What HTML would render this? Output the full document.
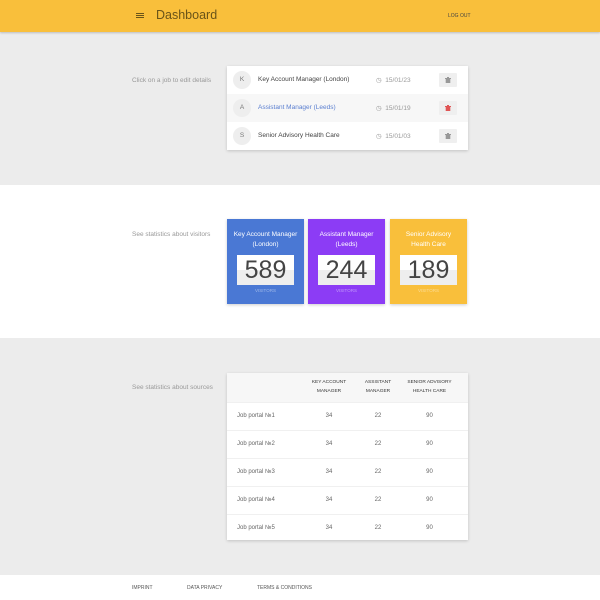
<!DOCTYPE html>
<html><head><meta charset="utf-8"><style>
*{margin:0;padding:0;box-sizing:border-box}
body{width:600px;height:600px;position:relative;font-family:"Liberation Sans",sans-serif;background:#fff;overflow:hidden;color:#333}
.a{position:absolute}
.hdr{left:0;top:0;width:600px;height:32px;background:#f9bf3b;box-shadow:0 1px 2px rgba(0,0,0,.2);z-index:2}
.g{background:#ececec;left:0;width:600px}
.lbl{font-size:6.5px;color:#999}
.card{background:#fff;box-shadow:0 1px 3px rgba(0,0,0,.18)}
.row{position:absolute;left:0;width:241px;height:28px;font-size:6.5px;color:#444}
.av{position:absolute;left:6px;top:5px;width:18px;height:18px;border-radius:50%;background:#eee;color:#777;font-size:6.5px;text-align:center;line-height:18px}
.st{top:219px;height:85px;width:77px;color:#fff;text-align:center;font-size:6.5px;box-shadow:0 1px 3px rgba(0,0,0,.2)}
.num{position:absolute;left:10px;top:36px;width:57px;height:30px;background:linear-gradient(#fff 50%,#eee 50%);color:#444;font-size:25px;line-height:30px}
.vis{position:absolute;left:0;width:100%;top:69px;font-size:4.5px;opacity:.45}
.btn{position:absolute;left:212px;top:7px;width:18px;height:14px;background:#efefef;border-radius:1px}
.btn svg{position:absolute;left:6px;top:4px}
td{font-size:6px;color:#666;height:28px;border-top:1px solid #f0f0f0}
th{font-size:4.8px;font-weight:normal;color:#333;height:29px;background:#f7f7f7;line-height:9px}
.hl{position:absolute;left:136px;width:8px;height:1.3px;background:#6a5419}
</style></head><body>
<div class="a hdr">
 <div class="hl" style="top:13px"></div><div class="hl" style="top:15px"></div><div class="hl" style="top:17px"></div>
 <div class="a" style="left:156px;top:8px;font-size:12.5px;color:#6a5419">Dashboard</div>
 <div class="a" style="left:448px;top:13px;font-size:5px;color:#444">LOG OUT</div>
</div>
<div class="a g" style="top:32px;height:153px"></div>
<div class="a g" style="top:338px;height:237px"></div>

<div class="a lbl" style="left:132px;top:77px">Click on a job to edit details</div>
<div class="a card" style="left:227px;top:66px;width:241px;height:84px">
 <div class="row" style="top:0"><div class="av">K</div><span class="a" style="left:31px;top:10px">Key Account Manager (London)</span><span class="a" style="left:149px;top:10px;color:#999">◷&nbsp; 15/01/23</span><div class="btn"><svg width="6" height="6" viewBox="0 0 6 6"><rect x="0" y="1" width="6" height="1" fill="#999"/><rect x="2" y="0" width="2" height="1" fill="#999"/><rect x="0.7" y="2" width="4.6" height="4" fill="#999"/></svg></div></div>
 <div class="row" style="top:28px;background:#f7f7f7"><div class="av">A</div><span class="a" style="left:31px;top:10px;color:#5b7fd0">Assistant Manager (Leeds)</span><span class="a" style="left:149px;top:10px;color:#999">◷&nbsp; 15/01/19</span><div class="btn"><svg width="6" height="6" viewBox="0 0 6 6"><rect x="0" y="1" width="6" height="1" fill="#e05555"/><rect x="2" y="0" width="2" height="1" fill="#e05555"/><rect x="0.7" y="2" width="4.6" height="4" fill="#e05555"/></svg></div></div>
 <div class="row" style="top:56px"><div class="av">S</div><span class="a" style="left:31px;top:10px">Senior Advisory Health Care</span><span class="a" style="left:149px;top:10px;color:#999">◷&nbsp; 15/01/03</span><div class="btn"><svg width="6" height="6" viewBox="0 0 6 6"><rect x="0" y="1" width="6" height="1" fill="#999"/><rect x="2" y="0" width="2" height="1" fill="#999"/><rect x="0.7" y="2" width="4.6" height="4" fill="#999"/></svg></div></div>
</div>

<div class="a lbl" style="left:132px;top:231px">See statistics about visitors</div>
<div class="a st" style="left:227px;background:#4a78d4"><div style="margin-top:11px;line-height:10px">Key Account Manager<br>(London)</div><div class="num">589</div><div class="vis">VISITORS</div></div>
<div class="a st" style="left:308px;background:#8c3cf5"><div style="margin-top:11px;line-height:10px">Assistant Manager<br>(Leeds)</div><div class="num">244</div><div class="vis">VISITORS</div></div>
<div class="a st" style="left:390px;background:#f9bf3b"><div style="margin-top:11px;line-height:10px">Senior Advisory<br>Health Care</div><div class="num">189</div><div class="vis">VISITORS</div></div>

<div class="a lbl" style="left:132px;top:384px">See statistics about sources</div>
<div class="a card" style="left:227px;top:373px;width:241px;height:167px">
<table style="width:241px;border-collapse:collapse;text-align:center;table-layout:fixed">
<col style="width:78px"><col style="width:48px"><col style="width:50px"><col style="width:53px"><col style="width:12px">
<tr><th></th><th>KEY ACCOUNT<br>MANAGER</th><th>ASSISTANT<br>MANAGER</th><th style="white-space:nowrap">SENIOR ADVISORY<br>HEALTH CARE</th><th></th></tr>
<tr><td style="text-align:left;padding-left:10px">Job portal №1</td><td>34</td><td>22</td><td>90</td><td></td></tr>
<tr><td style="text-align:left;padding-left:10px">Job portal №2</td><td>34</td><td>22</td><td>90</td><td></td></tr>
<tr><td style="text-align:left;padding-left:10px">Job portal №3</td><td>34</td><td>22</td><td>90</td><td></td></tr>
<tr><td style="text-align:left;padding-left:10px">Job portal №4</td><td>34</td><td>22</td><td>90</td><td></td></tr>
<tr><td style="text-align:left;padding-left:10px">Job portal №5</td><td>34</td><td>22</td><td>90</td><td></td></tr>
</table></div>

<div class="a" style="left:132px;top:585px;font-size:5px;color:#555">IMPRINT</div>
<div class="a" style="left:187px;top:585px;font-size:5px;color:#555">DATA PRIVACY</div>
<div class="a" style="left:257px;top:585px;font-size:5px;color:#555">TERMS &amp; CONDITIONS</div>
</body></html>
